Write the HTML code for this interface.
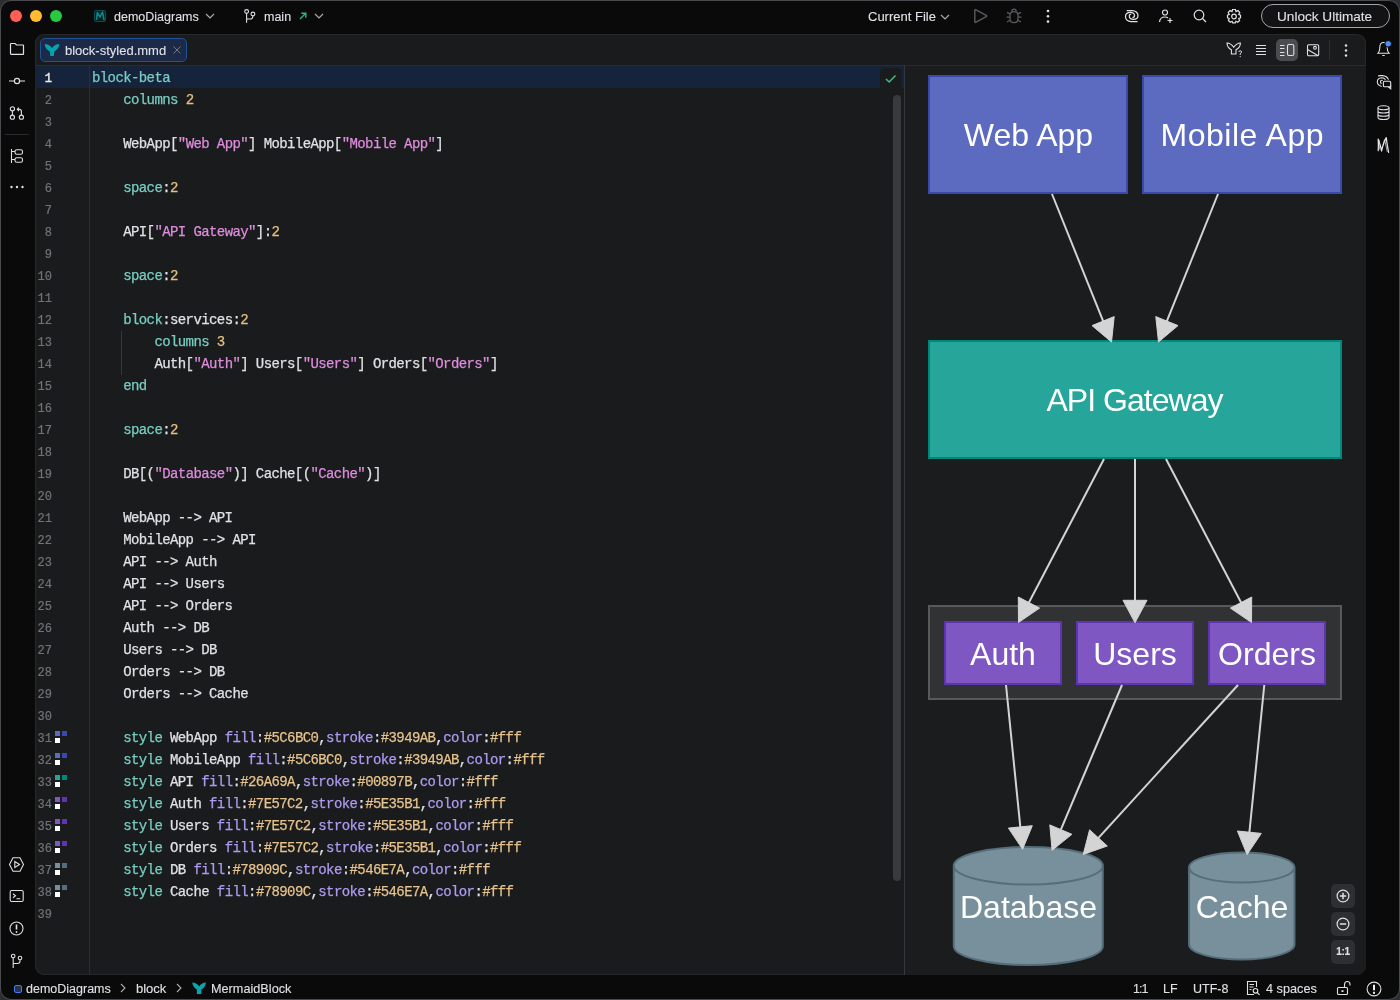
<!DOCTYPE html>
<html><head><meta charset="utf-8">
<style>
*{box-sizing:border-box;margin:0;padding:0}
html,body{width:1400px;height:1000px;overflow:hidden;background:#2c2e33}
body{font-family:"Liberation Sans",sans-serif;color:#dfe1e5;position:relative}
.abs{position:absolute}
#win{position:absolute;left:0;top:0;width:1400px;height:1000px;background:#0a0a0b;border-radius:11px;box-shadow:inset 0 0 0 1px #4a4b4e;overflow:hidden}
.tl{position:absolute;top:10px;width:12px;height:12px;border-radius:50%}
.ui{position:absolute;font-size:13px;white-space:nowrap;line-height:16px;color:#dfe1e5}
svg.ic{position:absolute;overflow:visible}
#panel{position:absolute;left:35px;top:34px;width:1331px;height:941px;background:#1a1b1d;border-radius:9px;box-shadow:inset 0 0 0 1px #26272a;overflow:hidden}
#tabbar{position:absolute;left:0;top:0;width:1331px;height:32px;border-bottom:1px solid #2b2c30}
#code{position:absolute;left:0;top:32px;width:869px;height:910px}
.ln{position:absolute;left:0;width:17px;-webkit-text-stroke:0.2px currentColor;text-align:right;font-family:"Liberation Mono",monospace;font-size:12px;color:#6f737a;height:22px;line-height:22px;margin-top:2px}
.cl{position:absolute;left:57px;font-family:"Liberation Mono",monospace;font-size:14px;letter-spacing:-0.6px;white-space:pre;height:22px;line-height:22px;color:#dfe1e5;margin-top:1px}
.k{color:#78cdc2}.s{color:#de8cdc}.n{color:#e4bf82}.p{color:#ae9bf0}.v{color:#e6c28c}
.sq{position:absolute;width:5px;height:5px}
.ln.cur{color:#e8eaee;-webkit-text-stroke:0.45px #e8eaee}
#preview{position:absolute;left:870px;top:32px;width:461px;height:909px;background:#1b1c1e;overflow:hidden}
.cl,.ui,.ln,#preview svg{will-change:transform}
.cl{-webkit-text-stroke:0.25px currentColor}
.ui{-webkit-text-stroke:0.1px currentColor}
</style></head><body>
<div id="win">
  <!-- traffic lights -->
  <div class="tl" style="left:10px;background:#fe5f57"></div>
  <div class="tl" style="left:30px;background:#febc2e"></div>
  <div class="tl" style="left:50px;background:#28c840"></div>

  <!-- title bar -->
  <svg class="ic" style="left:93px;top:9px" width="14" height="14"><rect x="1.5" y="1.5" width="11" height="11" rx="1.5" fill="#03211f" stroke="#0c4a4d" stroke-width="1.1"/><path d="M3.6 11 L4.2 3.5 L7 8 L9.5 3 L11 11.2" fill="none" stroke="#0a858d" stroke-width="1.6" stroke-linejoin="round"/></svg>
  <div class="ui" style="left:114px;top:9px;font-size:12.5px">demoDiagrams</div>
  <svg class="ic" style="left:205px;top:13px" width="10" height="6"><path d="M1 1 L5 5 L9 1" fill="none" stroke="#a8abb0" stroke-width="1.2"/></svg>
  <svg class="ic" style="left:243px;top:9px" width="14" height="14"><g fill="none" stroke="#dfe1e5" stroke-width="1.1"><circle cx="3.6" cy="2.5" r="1.9"/><circle cx="9.9" cy="5" r="1.9"/><path d="M3.6 4.4 V13.7 M9.9 6.9 Q9.9 10 6.8 10 H3.6"/></g></svg>
  <div class="ui" style="left:264px;top:9px;font-size:12.5px">main</div>
  <svg class="ic" style="left:299px;top:12px" width="8" height="8"><path d="M1 7 L6.5 1.5 M2.3 1.2 H6.8 V5.7" fill="none" stroke="#2bb57f" stroke-width="1.4"/></svg>
  <svg class="ic" style="left:314px;top:13px" width="10" height="6"><path d="M1 1 L5 5 L9 1" fill="none" stroke="#a8abb0" stroke-width="1.2"/></svg>

  <div class="ui" style="left:868px;top:9px">Current File</div>
  <svg class="ic" style="left:940px;top:14px" width="10" height="6"><path d="M1 1 L5 5 L9 1" fill="none" stroke="#a8abb0" stroke-width="1.2"/></svg>
  <svg class="ic" style="left:973px;top:8px" width="16" height="16"><path d="M1.8 2.6 Q1.8 1.2 3 1.9 L13.2 7.3 Q14.2 8 13.2 8.7 L3 14.2 Q1.8 14.9 1.8 13.5 Z" fill="none" stroke="#5a5b5e" stroke-width="1.4" stroke-linejoin="round"/></svg>
  <svg class="ic" style="left:1005px;top:8px" width="18" height="16"><g fill="none" stroke="#5a5b5e" stroke-width="1.3"><path d="M6.8 3.6 Q6.8 1.2 9 1.2 Q11.2 1.2 11.2 3.6"/><path d="M5 7 Q5 3.6 9 3.6 Q13 3.6 13 7 V10.5 Q13 14.7 9 14.7 Q5 14.7 5 10.5 Z"/><path d="M5 5.8 L2 4.3 M13 5.8 L16 4.3 M5 9.2 H1.5 M13 9.2 H16.5 M5 12.3 L2 14 M13 12.3 L16 14"/></g></svg>
  <svg class="ic" style="left:1045px;top:8px" width="6" height="16"><circle cx="3" cy="3" r="1.3" fill="#dfe1e5"/><circle cx="3" cy="8.3" r="1.3" fill="#dfe1e5"/><circle cx="3" cy="13.6" r="1.3" fill="#dfe1e5"/></svg>

  <svg class="ic" style="left:1124px;top:8px" width="16" height="16"><path d="M2.7 2.5 H8 C11.5 2.5 14 5 14 7.5 C14 10 12 11.3 9.5 11.3 C7 11.3 5.3 9.8 5.3 8 C5.3 6.8 6.2 6 7.2 6 M13.5 13.5 H7 C3.5 13.5 1.5 11 1.5 8.5 C1.5 5.8 3.7 4.3 6.5 4.3 C8.8 4.3 10.5 5.8 10.5 7.5 C10.5 8.8 9.5 9.5 8.5 9.5" fill="none" stroke="#dfe1e5" stroke-width="1.25"/></svg>
  <svg class="ic" style="left:1158px;top:8px" width="16" height="16"><g fill="none" stroke="#dfe1e5" stroke-width="1.2"><circle cx="7" cy="4.5" r="2.5"/><path d="M1.5 14 Q2 9 7 9 Q9 9 10 10 M12 10 V15 M9.5 12.5 H14.5"/></g></svg>
  <svg class="ic" style="left:1192px;top:8px" width="16" height="16"><g fill="none" stroke="#dfe1e5" stroke-width="1.2"><circle cx="7" cy="7" r="4.8"/><path d="M10.5 10.5 L14 14"/></g></svg>
  <svg class="ic" style="left:1226px;top:8px" width="16" height="16"><g fill="none" stroke="#dfe1e5" stroke-width="1.2"><path d="M6.6 1.5 H9.4 L10 3.6 L12 2.6 L13.8 4.6 L12.7 6.5 L14.5 7.2 V9.8 L12.7 10.5 L13.6 12.5 L11.7 14.3 L9.9 13.3 L9.3 14.9 H6.7 L6.1 13.3 L4.3 14.3 L2.4 12.5 L3.3 10.5 L1.5 9.8 V7.2 L3.3 6.5 L2.2 4.6 L4 2.6 L6 3.6 Z"/><circle cx="8" cy="8.5" r="2.3"/></g></svg>
  <div class="abs" style="left:1261px;top:4px;width:129px;height:24px;border:1.6px solid #a2a5aa;border-radius:12px;background:#131315"></div>
  <div class="ui" style="left:1277px;top:9px;font-size:13.6px">Unlock Ultimate</div>

  <!-- left strip -->
  <svg class="ic" style="left:8px;top:41px" width="18" height="16"><path d="M2.8 2.5 H7 L8.5 4 H15 Q15.5 4 15.5 4.5 V12.7 Q15.5 13.3 15 13.3 H3.3 Q2.5 13.3 2.5 12.5 V3 Q2.5 2.5 3 2.5 Z" fill="none" stroke="#dfe1e5" stroke-width="1.2"/></svg>
  <svg class="ic" style="left:7px;top:73px" width="20" height="16"><g fill="none" stroke="#dfe1e5" stroke-width="1.2"><circle cx="10" cy="8" r="2.6"/><path d="M2 8 H7.4 M12.6 8 H18"/></g></svg>
  <svg class="ic" style="left:8px;top:105px" width="18" height="18"><g fill="none" stroke="#dfe1e5" stroke-width="1.1"><circle cx="4.4" cy="3.8" r="2.1"/><circle cx="4.4" cy="12.2" r="2.1"/><circle cx="13.4" cy="12.2" r="2.1"/><path d="M4.4 5.9 V10.1 M13.4 10.1 V6.6 Q13.4 4.3 11.2 4.3 H9.5 M11 2.6 L9.3 4.3 L11 6"/></g></svg>
  <div class="abs" style="left:5px;top:134px;width:24px;height:1px;background:#2a2b2e"></div>
  <svg class="ic" style="left:8px;top:148px" width="18" height="18"><g fill="none" stroke="#dfe1e5" stroke-width="1.1"><path d="M3.5 1 V15 M3.5 3.5 H7 M3.5 11.5 H7"/><rect x="7" y="1.7" width="7.5" height="4.6" rx="1.8"/><rect x="7" y="9.7" width="7.5" height="4.6" rx="1.8"/></g></svg>
  <svg class="ic" style="left:8px;top:182px" width="18" height="10"><circle cx="3.5" cy="5" r="1.2" fill="#dfe1e5"/><circle cx="9" cy="5" r="1.2" fill="#dfe1e5"/><circle cx="14.5" cy="5" r="1.2" fill="#dfe1e5"/></svg>

  <svg class="ic" style="left:8px;top:856px" width="18" height="18"><g fill="none" stroke="#dfe1e5" stroke-width="1.1"><path d="M5 1.8 H12 L15.5 8.5 L12 15.2 H5 L1.5 8.5 Z"/><path d="M6.8 5.5 L11.5 8.5 L6.8 11.5 Z"/></g></svg>
  <svg class="ic" style="left:8px;top:888px" width="18" height="18"><g fill="none" stroke="#dfe1e5" stroke-width="1.1"><rect x="2.2" y="2.5" width="13" height="11" rx="1.5"/><path d="M5 5.8 L7.5 7.8 L5 9.8 M8.5 10.8 H12.2"/></g></svg>
  <svg class="ic" style="left:8px;top:920px" width="18" height="18"><g fill="none" stroke="#dfe1e5" stroke-width="1.1"><circle cx="8.5" cy="8.5" r="6.5"/></g><path d="M8.5 4.5 V9.5" stroke="#dfe1e5" stroke-width="1.6"/><circle cx="8.5" cy="12" r="0.9" fill="#dfe1e5"/></svg>
  <svg class="ic" style="left:9px;top:953px" width="18" height="18"><g fill="none" stroke="#dfe1e5" stroke-width="1.1"><circle cx="4.2" cy="3" r="1.8"/><circle cx="11" cy="5" r="1.8"/><path d="M4.2 4.8 V15 M4.2 10.5 H8.5 Q11 10.5 11 8 V6.8"/></g></svg>

  <!-- right strip -->
  <svg class="ic" style="left:1375px;top:40px" width="18" height="18"><g fill="none" stroke="#dfe1e5" stroke-width="1.1"><path d="M3 13.2 Q4.8 11.5 4.8 7.5 Q4.8 2.5 8.5 2.5 Q12.2 2.5 12.2 7.5 Q12.2 11.5 14 13.2 Z"/><path d="M7.3 15.5 H9.7"/></g><circle cx="13.2" cy="3.8" r="3.3" fill="#4f8ef7" stroke="#0a0a0b" stroke-width="1"/></svg>
  <svg class="ic" style="left:1374px;top:73px" width="20" height="20"><g fill="none" stroke="#dfe1e5" stroke-width="1.1"><path d="M4.1 2.9 Q6 2.5 8.5 2.6 Q13 2.9 14.5 6.6 M11.5 6.6 Q10 4.8 8 4.8 Q3.3 5 3.3 9 Q3.3 12 7.6 13.5 M8.6 7.4 Q7.5 6.9 6.7 7.8 Q6 9 7.3 11"/><rect x="9.4" y="8.3" width="7.3" height="5.5" rx="1"/><path d="M16.7 12.5 V15.8 L14.2 13.8"/></g></svg>
  <svg class="ic" style="left:1375px;top:104px" width="18" height="18"><g fill="none" stroke="#dfe1e5" stroke-width="1.1"><ellipse cx="8.5" cy="3.8" rx="5.5" ry="2"/><path d="M3 3.8 V13.5 Q3 15.5 8.5 15.5 Q14 15.5 14 13.5 V3.8 M3 7 Q3 9 8.5 9 Q14 9 14 7 M3 10.3 Q3 12.3 8.5 12.3 Q14 12.3 14 10.3"/></g></svg>
  <svg class="ic" style="left:1375px;top:136px" width="18" height="18"><path d="M3.2 3.2 Q3.6 9 3.2 14.6 M3.4 3.4 Q5.5 9 6.5 15 Q8 9 9.6 4 M11.2 1.6 Q12.2 9 13.6 16.4 M11.2 1.6 Q8.5 7 6.8 13" fill="none" stroke="#e4e6ea" stroke-width="1.25" stroke-linejoin="round" stroke-linecap="round"/><path d="M4.6 4.5 Q4.4 10 4.3 13.5 M9.8 4.5 Q11 10 12.3 15.8" fill="none" stroke="#c8cacd" stroke-width="0.8"/></svg>

  <!-- editor panel -->
  <div id="panel">
    <div id="tabbar">
      <div class="abs" style="left:5px;top:4px;width:147px;height:24px;background:#1c2a47;border:1px solid #1f5299;border-radius:5px"></div>
      <svg class="ic" style="left:9px;top:9px" width="16" height="14"><path d="M0.8 1 Q5 1.2 8 5 Q11 1.2 15.2 1 Q15.2 6 10.3 8.5 L9.8 13 H6.3 L5.8 8.5 Q0.8 6 0.8 1 Z" fill="#04a3ae"/></svg>
      <div class="ui" style="left:30px;top:9px">block-styled.mmd</div>
      <svg class="ic" style="left:138px;top:12px" width="8" height="8"><path d="M0.5 0.5 L7.5 7.5 M7.5 0.5 L0.5 7.5" stroke="#74777c" stroke-width="1"/></svg>

      <!-- editor toolbar -->
      <svg class="ic" style="left:1190px;top:7px" width="20" height="20"><g fill="none" stroke="#dfe1e5" stroke-width="1.1"><path d="M2 2 Q5.8 2 8.7 6.3 Q11.6 2 15.4 2 Q15.4 6.5 11 8.8 V13 H6.4 V8.8 Q2 6.5 2 2 Z"/><path d="M13.9 11 Q13.9 9.7 15.2 9.7 Q16.5 9.7 16.5 11 Q16.5 12 15.2 12.6 V14" stroke-width="0.95"/></g><circle cx="15.2" cy="15.6" r="0.6" fill="#dfe1e5"/></svg>
      <svg class="ic" style="left:1218px;top:9px" width="16" height="16"><path d="M3 2.5 H13 M3 5.5 H13 M3 8.5 H13 M3 11.5 H13" stroke="#dfe1e5" stroke-width="1.1"/></svg>
      <div class="abs" style="left:1241px;top:5px;width:22px;height:22px;background:#4b4c50;border-radius:5px"></div>
      <svg class="ic" style="left:1244px;top:9px" width="18" height="16"><g fill="none" stroke="#dfe1e5" stroke-width="1.1"><path d="M1 2.5 H5.5 M1 5.5 H5.5 M1 9.5 H5.5 M1 12.5 H5.5"/><rect x="8.5" y="1.5" width="6.3" height="11" rx="1.5"/></g></svg>
      <svg class="ic" style="left:1271px;top:9px" width="16" height="16"><g fill="none" stroke="#dfe1e5" stroke-width="1.1"><rect x="1.5" y="1.8" width="11.2" height="11" rx="1.2"/><circle cx="9" cy="4.8" r="1.4"/><path d="M1.5 6.5 L12.2 12.8"/></g></svg>
      <div class="abs" style="left:1294px;top:6px;width:1px;height:20px;background:#2e2f33"></div>
      <svg class="ic" style="left:1308px;top:9px" width="6" height="16"><circle cx="3" cy="2.5" r="1.2" fill="#dfe1e5"/><circle cx="3" cy="7.5" r="1.2" fill="#dfe1e5"/><circle cx="3" cy="12.5" r="1.2" fill="#dfe1e5"/></svg>
    </div>

    <div id="code">
      <div class="abs" style="left:0;top:0;width:869px;height:22px;background:#15243a"></div>
      <div class="abs" style="left:54px;top:0;width:1px;height:910px;background:#2d2e31"></div>
      <div id="lines">
<div class="ln cur" style="top:0px">1</div>
<div class="cl" style="top:0px"><span class="k">block-beta</span></div>
<div class="ln" style="top:22px">2</div>
<div class="cl" style="top:22px"><span class="k">    columns</span> <span class="n">2</span></div>
<div class="ln" style="top:44px">3</div>
<div class="ln" style="top:66px">4</div>
<div class="cl" style="top:66px">    WebApp[<span class="s">&quot;Web App&quot;</span>] MobileApp[<span class="s">&quot;Mobile App&quot;</span>]</div>
<div class="ln" style="top:88px">5</div>
<div class="ln" style="top:110px">6</div>
<div class="cl" style="top:110px"><span class="k">    space</span>:<span class="n">2</span></div>
<div class="ln" style="top:132px">7</div>
<div class="ln" style="top:154px">8</div>
<div class="cl" style="top:154px">    API[<span class="s">&quot;API Gateway&quot;</span>]:<span class="n">2</span></div>
<div class="ln" style="top:176px">9</div>
<div class="ln" style="top:198px">10</div>
<div class="cl" style="top:198px"><span class="k">    space</span>:<span class="n">2</span></div>
<div class="ln" style="top:220px">11</div>
<div class="ln" style="top:242px">12</div>
<div class="cl" style="top:242px"><span class="k">    block</span>:services:<span class="n">2</span></div>
<div class="ln" style="top:264px">13</div>
<div class="cl" style="top:264px"><span class="k">        columns</span> <span class="n">3</span></div>
<div class="ln" style="top:286px">14</div>
<div class="cl" style="top:286px">        Auth[<span class="s">&quot;Auth&quot;</span>] Users[<span class="s">&quot;Users&quot;</span>] Orders[<span class="s">&quot;Orders&quot;</span>]</div>
<div class="ln" style="top:308px">15</div>
<div class="cl" style="top:308px"><span class="k">    end</span></div>
<div class="ln" style="top:330px">16</div>
<div class="ln" style="top:352px">17</div>
<div class="cl" style="top:352px"><span class="k">    space</span>:<span class="n">2</span></div>
<div class="ln" style="top:374px">18</div>
<div class="ln" style="top:396px">19</div>
<div class="cl" style="top:396px">    DB[(<span class="s">&quot;Database&quot;</span>)] Cache[(<span class="s">&quot;Cache&quot;</span>)]</div>
<div class="ln" style="top:418px">20</div>
<div class="ln" style="top:440px">21</div>
<div class="cl" style="top:440px">    WebApp --&gt; API</div>
<div class="ln" style="top:462px">22</div>
<div class="cl" style="top:462px">    MobileApp --&gt; API</div>
<div class="ln" style="top:484px">23</div>
<div class="cl" style="top:484px">    API --&gt; Auth</div>
<div class="ln" style="top:506px">24</div>
<div class="cl" style="top:506px">    API --&gt; Users</div>
<div class="ln" style="top:528px">25</div>
<div class="cl" style="top:528px">    API --&gt; Orders</div>
<div class="ln" style="top:550px">26</div>
<div class="cl" style="top:550px">    Auth --&gt; DB</div>
<div class="ln" style="top:572px">27</div>
<div class="cl" style="top:572px">    Users --&gt; DB</div>
<div class="ln" style="top:594px">28</div>
<div class="cl" style="top:594px">    Orders --&gt; DB</div>
<div class="ln" style="top:616px">29</div>
<div class="cl" style="top:616px">    Orders --&gt; Cache</div>
<div class="ln" style="top:638px">30</div>
<div class="ln" style="top:660px">31</div>
<div class="cl" style="top:660px"><span class="k">    style</span> WebApp <span class="p">fill</span>:<span class="v">#5C6BC0</span>,<span class="p">stroke</span>:<span class="v">#3949AB</span>,<span class="p">color</span>:<span class="v">#fff</span></div>
<div class="ln" style="top:682px">32</div>
<div class="cl" style="top:682px"><span class="k">    style</span> MobileApp <span class="p">fill</span>:<span class="v">#5C6BC0</span>,<span class="p">stroke</span>:<span class="v">#3949AB</span>,<span class="p">color</span>:<span class="v">#fff</span></div>
<div class="ln" style="top:704px">33</div>
<div class="cl" style="top:704px"><span class="k">    style</span> API <span class="p">fill</span>:<span class="v">#26A69A</span>,<span class="p">stroke</span>:<span class="v">#00897B</span>,<span class="p">color</span>:<span class="v">#fff</span></div>
<div class="ln" style="top:726px">34</div>
<div class="cl" style="top:726px"><span class="k">    style</span> Auth <span class="p">fill</span>:<span class="v">#7E57C2</span>,<span class="p">stroke</span>:<span class="v">#5E35B1</span>,<span class="p">color</span>:<span class="v">#fff</span></div>
<div class="ln" style="top:748px">35</div>
<div class="cl" style="top:748px"><span class="k">    style</span> Users <span class="p">fill</span>:<span class="v">#7E57C2</span>,<span class="p">stroke</span>:<span class="v">#5E35B1</span>,<span class="p">color</span>:<span class="v">#fff</span></div>
<div class="ln" style="top:770px">36</div>
<div class="cl" style="top:770px"><span class="k">    style</span> Orders <span class="p">fill</span>:<span class="v">#7E57C2</span>,<span class="p">stroke</span>:<span class="v">#5E35B1</span>,<span class="p">color</span>:<span class="v">#fff</span></div>
<div class="ln" style="top:792px">37</div>
<div class="cl" style="top:792px"><span class="k">    style</span> DB <span class="p">fill</span>:<span class="v">#78909C</span>,<span class="p">stroke</span>:<span class="v">#546E7A</span>,<span class="p">color</span>:<span class="v">#fff</span></div>
<div class="ln" style="top:814px">38</div>
<div class="cl" style="top:814px"><span class="k">    style</span> Cache <span class="p">fill</span>:<span class="v">#78909C</span>,<span class="p">stroke</span>:<span class="v">#546E7A</span>,<span class="p">color</span>:<span class="v">#fff</span></div>
<div class="ln" style="top:836px">39</div>
<div class="sq" style="left:20px;top:665px;background:#5C6BC0"></div><div class="sq" style="left:27px;top:665px;background:#3949AB"></div><div class="sq" style="left:20px;top:672px;background:#fff"></div>
<div class="sq" style="left:20px;top:687px;background:#5C6BC0"></div><div class="sq" style="left:27px;top:687px;background:#3949AB"></div><div class="sq" style="left:20px;top:694px;background:#fff"></div>
<div class="sq" style="left:20px;top:709px;background:#26A69A"></div><div class="sq" style="left:27px;top:709px;background:#00897B"></div><div class="sq" style="left:20px;top:716px;background:#fff"></div>
<div class="sq" style="left:20px;top:731px;background:#7E57C2"></div><div class="sq" style="left:27px;top:731px;background:#5E35B1"></div><div class="sq" style="left:20px;top:738px;background:#fff"></div>
<div class="sq" style="left:20px;top:753px;background:#7E57C2"></div><div class="sq" style="left:27px;top:753px;background:#5E35B1"></div><div class="sq" style="left:20px;top:760px;background:#fff"></div>
<div class="sq" style="left:20px;top:775px;background:#7E57C2"></div><div class="sq" style="left:27px;top:775px;background:#5E35B1"></div><div class="sq" style="left:20px;top:782px;background:#fff"></div>
<div class="sq" style="left:20px;top:797px;background:#78909C"></div><div class="sq" style="left:27px;top:797px;background:#546E7A"></div><div class="sq" style="left:20px;top:804px;background:#fff"></div>
<div class="sq" style="left:20px;top:819px;background:#78909C"></div><div class="sq" style="left:27px;top:819px;background:#546E7A"></div><div class="sq" style="left:20px;top:826px;background:#fff"></div>
</div>
      <div class="abs" style="left:86px;top:265px;width:1px;height:44px;background:#353639"></div>
      <!-- check mark -->
      <div class="abs" style="left:845px;top:2px;width:22px;height:20px;background:#1a1b1d;border-radius:5px 5px 0 0"></div>
      <svg class="ic" style="left:850px;top:8px" width="12" height="10"><path d="M1 5 L4.2 8 L10.5 1.5" fill="none" stroke="#3cba85" stroke-width="1.6"/></svg>
      <!-- scrollbar -->
      <div class="abs" style="left:858px;top:29px;width:8px;height:786px;background:#393a3d;border-radius:4px"></div>
    </div>
    <div class="abs" style="left:869px;top:32px;width:1px;height:909px;background:#36373a"></div>

    <div id="preview"><svg style="position:absolute;left:0;top:0" width="461" height="909" viewBox="905 66 461 909"><rect x="929.0" y="76.0" width="198" height="117" fill="#5c6bc0" stroke="#3949ab" stroke-width="2"/><rect x="1143.0" y="76.0" width="198" height="117" fill="#5c6bc0" stroke="#3949ab" stroke-width="2"/><rect x="929.0" y="341.0" width="412" height="117" fill="#26a69a" stroke="#00897b" stroke-width="2"/><rect x="929.0" y="606.0" width="412" height="93" fill="#313234" stroke="#58595b" stroke-width="2"/><rect x="945.0" y="622.0" width="116" height="62" fill="#7e57c2" stroke="#5e35b1" stroke-width="2"/><rect x="1077.0" y="622.0" width="116" height="62" fill="#7e57c2" stroke="#5e35b1" stroke-width="2"/><rect x="1209.0" y="622.0" width="116" height="62" fill="#7e57c2" stroke="#5e35b1" stroke-width="2"/><path d="M953.8,865.8 L953.8,946.2 A74.5,18.8 0 0 0 1102.8,946.2 L1102.8,865.8 A74.5,18.8 0 0 0 953.8,865.8 A74.5,18.8 0 0 0 1102.8,865.8" fill="#78909c" stroke="#546e7a" stroke-width="2"/><path d="M1189.05,867.5 L1189.05,944.5 A52.7,15 0 0 0 1294.45,944.5 L1294.45,867.5 A52.7,15 0 0 0 1189.05,867.5 A52.7,15 0 0 0 1294.45,867.5" fill="#78909c" stroke="#546e7a" stroke-width="2"/><text x="1028.5" y="146" text-anchor="middle" fill="#fff" font-family="Liberation Sans" font-size="32">Web App</text><text x="1242" y="146" text-anchor="middle" fill="#fff" font-family="Liberation Sans" font-size="32" textLength="163" lengthAdjust="spacing">Mobile App</text><text x="1135" y="411" text-anchor="middle" fill="#fff" font-family="Liberation Sans" font-size="32" textLength="177" lengthAdjust="spacing">API Gateway</text><text x="1003" y="664.5" text-anchor="middle" fill="#fff" font-family="Liberation Sans" font-size="32">Auth</text><text x="1135" y="664.5" text-anchor="middle" fill="#fff" font-family="Liberation Sans" font-size="32">Users</text><text x="1267" y="664.5" text-anchor="middle" fill="#fff" font-family="Liberation Sans" font-size="32">Orders</text><text x="1028.5" y="918" text-anchor="middle" fill="#fff" font-family="Liberation Sans" font-size="32">Database</text><text x="1242" y="918" text-anchor="middle" fill="#fff" font-family="Liberation Sans" font-size="32">Cache</text><line x1="1052.0" y1="194.0" x2="1103.9" y2="323.0" stroke="#d4d4d4" stroke-width="2"/><polygon points="1111.5,342.0 1092.0,325.6 1114.2,316.6" fill="#d4d4d4" stroke="#d4d4d4" stroke-width="1" stroke-linejoin="round"/><line x1="1218.0" y1="194.0" x2="1166.1" y2="323.0" stroke="#d4d4d4" stroke-width="2"/><polygon points="1158.5,342.0 1155.8,316.6 1178.0,325.6" fill="#d4d4d4" stroke="#d4d4d4" stroke-width="1" stroke-linejoin="round"/><line x1="1104.0" y1="459.0" x2="1028.0" y2="604.3" stroke="#d4d4d4" stroke-width="2"/><polygon points="1018.5,622.5 1018.3,597.0 1039.6,608.1" fill="#d4d4d4" stroke="#d4d4d4" stroke-width="1" stroke-linejoin="round"/><line x1="1135.0" y1="459.0" x2="1135.0" y2="602.3" stroke="#d4d4d4" stroke-width="2"/><polygon points="1135.0,622.8 1123.0,600.3 1147.0,600.3" fill="#d4d4d4" stroke="#d4d4d4" stroke-width="1" stroke-linejoin="round"/><line x1="1166.0" y1="459.0" x2="1242.0" y2="604.3" stroke="#d4d4d4" stroke-width="2"/><polygon points="1251.5,622.5 1230.4,608.1 1251.7,597.0" fill="#d4d4d4" stroke="#d4d4d4" stroke-width="1" stroke-linejoin="round"/><line x1="1006.0" y1="685.0" x2="1020.5" y2="828.9" stroke="#d4d4d4" stroke-width="2"/><polygon points="1022.6,849.3 1008.4,828.1 1032.3,825.7" fill="#d4d4d4" stroke="#d4d4d4" stroke-width="1" stroke-linejoin="round"/><line x1="1122.0" y1="685.0" x2="1060.1" y2="831.4" stroke="#d4d4d4" stroke-width="2"/><polygon points="1052.1,850.3 1049.8,824.9 1071.9,834.3" fill="#d4d4d4" stroke="#d4d4d4" stroke-width="1" stroke-linejoin="round"/><line x1="1238.0" y1="685.0" x2="1097.1" y2="839.4" stroke="#d4d4d4" stroke-width="2"/><polygon points="1083.2,854.5 1089.6,829.8 1107.3,846.0" fill="#d4d4d4" stroke="#d4d4d4" stroke-width="1" stroke-linejoin="round"/><line x1="1264.3" y1="685.0" x2="1249.2" y2="834.2" stroke="#d4d4d4" stroke-width="2"/><polygon points="1247.1,854.6 1237.4,831.0 1261.3,833.4" fill="#d4d4d4" stroke="#d4d4d4" stroke-width="1" stroke-linejoin="round"/></svg></div>
  </div>

  <!-- zoom controls -->
  <div class="abs" style="left:1331px;top:884px;width:24px;height:24px;background:#2e2f32;border-radius:5px"></div>
  <div class="abs" style="left:1331px;top:912px;width:24px;height:24px;background:#2e2f32;border-radius:5px"></div>
  <div class="abs" style="left:1331px;top:940px;width:24px;height:24px;background:#2e2f32;border-radius:5px"></div>
  <svg class="ic" style="left:1331px;top:884px" width="24" height="24"><circle cx="12" cy="12" r="5.9" fill="none" stroke="#dfe1e5" stroke-width="1.2"/><path d="M12 8.8 V15.2 M8.8 12 H15.2" stroke="#dfe1e5" stroke-width="1.5"/></svg>
  <svg class="ic" style="left:1331px;top:912px" width="24" height="24"><circle cx="12" cy="12" r="5.9" fill="none" stroke="#dfe1e5" stroke-width="1.2"/><path d="M8.8 12 H15.2" stroke="#dfe1e5" stroke-width="1.5"/></svg>
  <div class="ui" style="left:1331px;top:944px;width:24px;text-align:center;font-size:10px;font-weight:bold;line-height:16px;letter-spacing:-0.3px">1:1</div>

  <!-- status bar -->
  <div class="abs" style="left:14px;top:985px;width:8px;height:8px;border:1.2px solid #3d7ff0;background:#27344f;border-radius:2px"></div>
  <div class="ui" style="left:26px;top:981px;font-size:12.5px">demoDiagrams</div>
  <svg class="ic" style="left:120px;top:983px" width="6" height="10"><path d="M1 1 L5 5 L1 9" fill="none" stroke="#a8abb0" stroke-width="1.1"/></svg>
  <div class="ui" style="left:136px;top:981px">block</div>
  <svg class="ic" style="left:176px;top:983px" width="6" height="10"><path d="M1 1 L5 5 L1 9" fill="none" stroke="#a8abb0" stroke-width="1.1"/></svg>
  <svg class="ic" style="left:192px;top:982px" width="16" height="13"><path d="M0.3 0.4 Q4.5 0.6 7.1 4.2 Q9.7 0.6 13.9 0.4 Q13.5 5 9.4 7.5 L9.3 12 H4.9 L4.8 7.5 Q0.7 5 0.3 0.4 Z" fill="#0ea2ab"/></svg>
  <div class="ui" style="left:211px;top:981px;font-size:12.7px">MermaidBlock</div>

  <div class="ui" style="left:1133px;top:981px;font-size:12.5px;letter-spacing:-0.9px">1:1</div>
  <div class="ui" style="left:1163px;top:981px;font-size:12.5px">LF</div>
  <div class="ui" style="left:1193px;top:981px;font-size:12.5px">UTF-8</div>
  <svg class="ic" style="left:1245px;top:980px" width="16" height="16"><g fill="none" stroke="#dfe1e5" stroke-width="1.1"><path d="M9 14.5 H2.5 V1.5 H11.5 V7"/><path d="M4.5 4.5 H9 M4.5 7 H8.5 M4.5 9.5 H6.5"/><circle cx="10.5" cy="10.8" r="2.3"/><path d="M12.2 12.5 L14.5 14.8"/></g></svg>
  <div class="ui" style="left:1266px;top:981px;font-size:12.7px">4 spaces</div>
  <svg class="ic" style="left:1336px;top:980px" width="16" height="16"><g fill="none" stroke="#dfe1e5" stroke-width="1.1"><rect x="1.5" y="7.5" width="10" height="7" rx="1"/><path d="M8.5 7.5 V4.5 Q8.5 1.5 11.3 1.5 Q14 1.5 14 4.5 V5.5"/></g><rect x="5.5" y="10.2" width="2" height="1.8" fill="#dfe1e5"/></svg>
  <svg class="ic" style="left:1366px;top:981px" width="16" height="16"><g fill="none" stroke="#dfe1e5" stroke-width="1.1"><circle cx="8" cy="8" r="6.9"/></g><path d="M8 3.8 V9.2" stroke="#f0f0f0" stroke-width="2"/><rect x="7" y="10.8" width="2" height="2" fill="#f0f0f0"/></svg>
</div>
</body></html>
